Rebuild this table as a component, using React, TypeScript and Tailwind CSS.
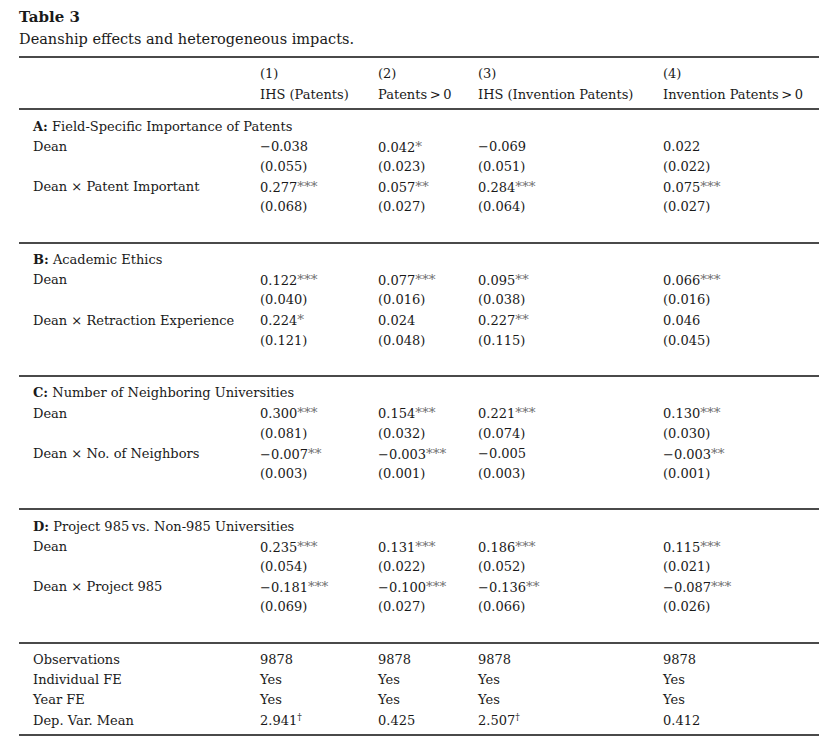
import React from "react"

type Row = { label: string; cells: string[] }
type Panel = { tag: string; title: string; rows: Row[] }

const panels: Panel[] = [
    {
        tag: "A:",
        title: "Field-Specific Importance of Patents",
        rows: [
            { label: "Dean", cells: ["−0.038", "0.042*", "−0.069", "0.022"] },
            { label: "", cells: ["(0.055)", "(0.023)", "(0.051)", "(0.022)"] },
            { label: "Dean × Patent Important", cells: ["0.277***", "0.057**", "0.284***", "0.075***"] },
            { label: "", cells: ["(0.068)", "(0.027)", "(0.064)", "(0.027)"] },
        ],
    },
    {
        tag: "B:",
        title: "Academic Ethics",
        rows: [
            { label: "Dean", cells: ["0.122***", "0.077***", "0.095**", "0.066***"] },
            { label: "", cells: ["(0.040)", "(0.016)", "(0.038)", "(0.016)"] },
            { label: "Dean × Retraction Experience", cells: ["0.224*", "0.024", "0.227**", "0.046"] },
            { label: "", cells: ["(0.121)", "(0.048)", "(0.115)", "(0.045)"] },
        ],
    },
    {
        tag: "C:",
        title: "Number of Neighboring Universities",
        rows: [
            { label: "Dean", cells: ["0.300***", "0.154***", "0.221***", "0.130***"] },
            { label: "", cells: ["(0.081)", "(0.032)", "(0.074)", "(0.030)"] },
            { label: "Dean × No. of Neighbors", cells: ["−0.007**", "−0.003***", "−0.005", "−0.003**"] },
            { label: "", cells: ["(0.003)", "(0.001)", "(0.003)", "(0.001)"] },
        ],
    },
    {
        tag: "D:",
        title: "Project 985\u2009vs. Non-985 Universities",
        rows: [
            { label: "Dean", cells: ["0.235***", "0.131***", "0.186***", "0.115***"] },
            { label: "", cells: ["(0.054)", "(0.022)", "(0.052)", "(0.021)"] },
            { label: "Dean × Project 985", cells: ["−0.181***", "−0.100***", "−0.136**", "−0.087***"] },
            { label: "", cells: ["(0.069)", "(0.027)", "(0.066)", "(0.026)"] },
        ],
    },
]

const grid = "grid grid-cols-[241px_118px_100px_185px_156px]"

function Cell({ value }: { value: string }) {
    const m = value.match(/^([^*†]*)(\**)(†?)$/)
    const num = m ? m[1] : value
    const stars = m ? m[2] : ""
    const dag = m ? m[3] : ""
    return (
        <div className="whitespace-nowrap">
            {num}
            {stars && <span className="text-[#6f6f6f] text-[13.5px] relative -top-[1px]">{stars}</span>}
            {dag && <sup className="text-[9px] -top-[5px]">{dag}</sup>}
        </div>
    )
}

function DataRow({ label, cells }: { label: string; cells: string[] }) {
    return (
        <div className={`${grid} h-[20.2px] items-center`}>
            <div className="pl-[14px] whitespace-nowrap">{label}</div>
            {cells.map((c, i) => (
                <Cell key={i} value={c} />
            ))}
        </div>
    )
}

export default function App() {
    return (
        <div
            className="w-[829px] h-[751px] bg-white text-[#1a1a1a] text-[13px] overflow-hidden"
            style={{ fontFamily: '"DejaVu Serif", "Liberation Serif", serif' }}
        >
            <div className="pl-[19px] pt-[7px]">
                <div className="font-bold text-[15px] leading-[20px]">Table 3</div>
                <div className="text-[14.5px] leading-[25px]">Deanship effects and heterogeneous impacts.</div>
            </div>

            <div className="ml-[19px] w-[800px] mt-[4px]">
                <div className="border-t-2 border-[#4a4a4a] pt-[6px] pb-[4px]">
                    <div className={`${grid} h-[20.2px] items-center`}>
                        <div />
                        <div>(1)</div>
                        <div>(2)</div>
                        <div>(3)</div>
                        <div>(4)</div>
                    </div>
                    <div className={`${grid} h-[20.2px] items-center`}>
                        <div />
                        <div>IHS (Patents)</div>
                        <div>Patents{"\u2009>\u2009"}0</div>
                        <div>IHS (Invention Patents)</div>
                        <div>Invention Patents{"\u2009>\u2009"}0</div>
                    </div>
                </div>

                {panels.map((p) => (
                    <div key={p.tag} className="border-t-2 border-[#4a4a4a] pt-[6px] pb-[24.4px]">
                        <div className="h-[20.2px] flex items-center pl-[14px]">
                            <span className="font-bold">{p.tag}</span>
                            <span>&nbsp;{p.title}</span>
                        </div>
                        {p.rows.map((r, i) => (
                            <DataRow key={i} label={r.label} cells={r.cells} />
                        ))}
                    </div>
                ))}

                <div className="border-t-2 border-b-2 border-[#4a4a4a] pt-[6px] pb-[4px]">
                    <DataRow label="Observations" cells={["9878", "9878", "9878", "9878"]} />
                    <DataRow label="Individual FE" cells={["Yes", "Yes", "Yes", "Yes"]} />
                    <DataRow label="Year FE" cells={["Yes", "Yes", "Yes", "Yes"]} />
                    <DataRow label="Dep. Var. Mean" cells={["2.941†", "0.425", "2.507†", "0.412"]} />
                </div>
            </div>
        </div>
    )
}
